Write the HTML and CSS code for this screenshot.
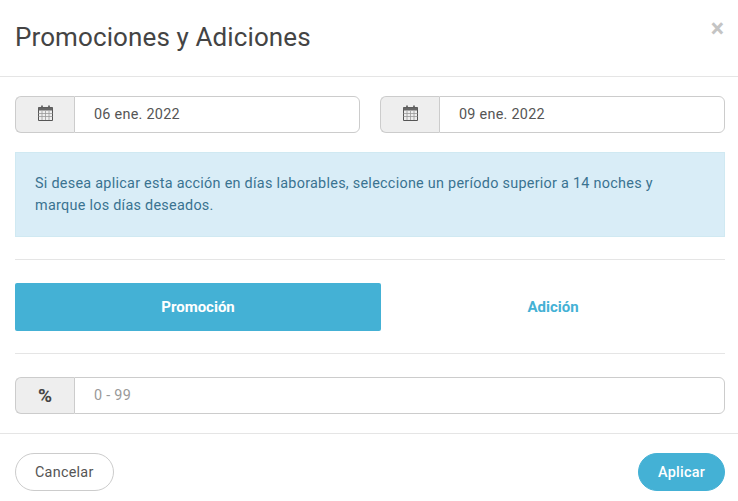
FILE: index.html
```html
<!DOCTYPE html>
<html lang="es">
    <head>
        <meta charset="UTF-8" />
        <meta name="viewport" content="width=device-width, initial-scale=1.0" />
        <title>Promociones y Adiciones</title>
        <link rel="stylesheet" href="styles.css">
    </head>
    <body>
        <div class="modal">
            <div class="modal-header">
                <h4 class="modal-title">Promociones y Adiciones</h4>
                <span class="close">×</span>
            </div>
            <div class="modal-body">
                <div class="date-row">
                    <div class="input-group">
                        <span class="addon">
                            <svg class="calendar" width="15" height="16" viewBox="0 0 15 16">
                                <path d="M4 0.5v4M11 0.5v4" stroke="#555" stroke-width="1.6" fill="none" />
                                <path d="M0.5 2.5h14v13h-14z" stroke="#555" fill="none" />
                                <path d="M0.5 2.5h14v3h-14z" fill="#666" />
                                <path d="M0.5 8.5h14M0.5 11.5h14M4 6v9M7.5 6v9M11 6v9" stroke="#999" stroke-width="0.8" fill="none" />
                            </svg>
                        </span>
                        <input class="field" type="text" value="06 ene. 2022" />
                    </div>
                    <div class="input-group">
                        <span class="addon">
                            <svg class="calendar" width="15" height="16" viewBox="0 0 15 16">
                                <path d="M4 0.5v4M11 0.5v4" stroke="#555" stroke-width="1.6" fill="none" />
                                <path d="M0.5 2.5h14v13h-14z" stroke="#555" fill="none" />
                                <path d="M0.5 2.5h14v3h-14z" fill="#666" />
                                <path d="M0.5 8.5h14M0.5 11.5h14M4 6v9M7.5 6v9M11 6v9" stroke="#999" stroke-width="0.8" fill="none" />
                            </svg>
                        </span>
                        <input class="field" type="text" value="09 ene. 2022" />
                    </div>
                </div>
                <div class="alert">Si desea aplicar esta acción en días laborables, seleccione un período superior a 14 noches y marque los días deseados.</div>
                <hr class="divider" />
                <div class="tabs">
                    <a class="tab active">Promoción</a>
                    <a class="tab">Adición</a>
                </div>
                <hr class="divider" />
                <div class="input-group">
                    <span class="addon percent">%</span>
                    <input class="field" type="text" placeholder="0 - 99" />
                </div>
            </div>
            <div class="modal-footer">
                <button class="btn btn-default">Cancelar</button>
                <button class="btn btn-primary">Aplicar</button>
            </div>
        </div>
    </body>
</html>
```

FILE: styles.css
```css
* {
    box-sizing: border-box;
}

body {
    margin: 0;
    background-color: #fff;
    color: #555;
    font-family: Roboto, "Liberation Sans", sans-serif;
    font-size: 14.4px;
}

.modal {
    width: 738px;
    height: 501px;
}

.modal-header {
    display: flex;
    justify-content: space-between;
    height: 77px;
    padding: 20px 14px 0 15px;
    border-bottom: 1px solid #e5e5e5;
}

.modal-title {
    margin: 0;
    color: #444;
    font-size: 26px;
    font-weight: 400;
    line-height: 34px;
    letter-spacing: 0.11px;
}

.close {
    margin-top: 1px;
    color: #c4c4c4;
    font-size: 25px;
    font-weight: 700;
    line-height: 15px;
}

.modal-body {
    height: 357px;
    padding: 19px 13px 0 15px;
    border-bottom: 1px solid #e5e5e5;
}

.date-row {
    display: flex;
    gap: 20px;
}

.input-group {
    display: flex;
    flex: 1;
    height: 37px;
}

.addon {
    display: flex;
    flex: 0 0 59px;
    align-items: center;
    justify-content: center;
    border: 1px solid #ccc;
    border-right: 0;
    border-radius: 6px 0 0 6px;
    background-color: #eee;
}

.calendar {
    margin-bottom: 3px;
}

.percent {
    color: #444;
    font-size: 19px;
    font-weight: 700;
}

.field {
    flex: 1;
    min-width: 0;
    padding: 0 19px;
    border: 1px solid #ccc;
    border-radius: 0 6px 6px 0;
    color: #555;
    font-family: inherit;
    font-size: 14.4px;
    letter-spacing: 0.27px;
}

.field::placeholder {
    color: #999;
}

.alert {
    height: 85px;
    margin-top: 19px;
    padding: 20px 40px 18px 19px;
    border: 1px solid #d0e9f2;
    background-color: #d9edf7;
    color: #3a7391;
    line-height: 22px;
    letter-spacing: 0.27px;
}

.divider {
    height: 1px;
    margin: 22px 0 23px;
    border: 0;
    background-color: #e5e5e5;
}

.tabs {
    display: flex;
}

.tab {
    flex: 1;
    height: 48px;
    color: #44b1d5;
    font-size: 15px;
    font-weight: 700;
    line-height: 48px;
    text-align: center;
}

.tab.active {
    flex: 0 0 366px;
    border-radius: 2px;
    background-color: #44b1d5;
    color: #fff;
}

.modal-footer {
    display: flex;
    justify-content: space-between;
    padding: 19px 13px 0 15px;
}

.btn {
    height: 38px;
    padding: 0 19px;
    border: 1px solid #ccc;
    border-radius: 19px;
    background-color: #fff;
    color: #555;
    font-family: inherit;
    font-size: 14.4px;
    letter-spacing: 0.25px;
}

.btn-primary {
    border-color: #44b1d5;
    background-color: #44b1d5;
    color: #fff;
    font-weight: 500;
}
```
